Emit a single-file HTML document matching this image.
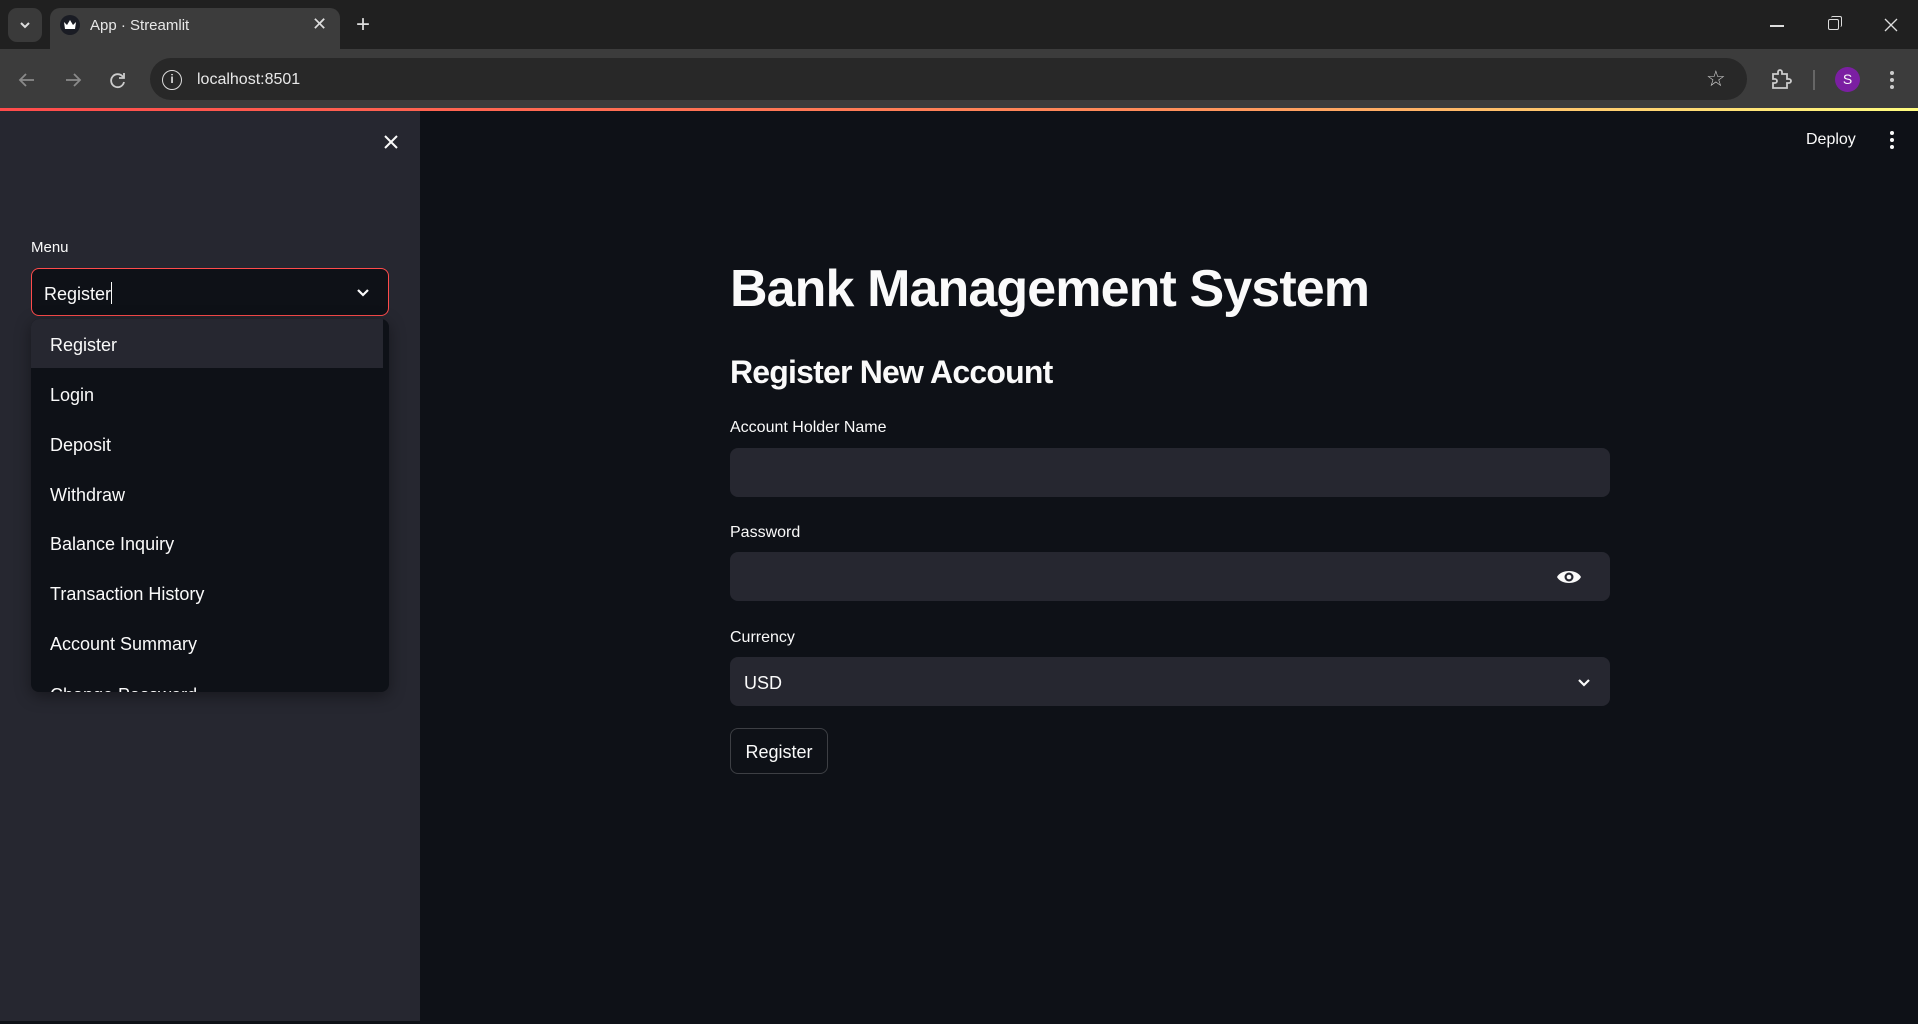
<!DOCTYPE html>
<html><head><meta charset="utf-8"><style>
*{margin:0;padding:0;box-sizing:border-box}
body{width:1918px;height:1024px;overflow:hidden;background:#0e1117;font-family:"Liberation Sans",sans-serif;color:#fafafa;position:relative}
.a{position:absolute}
.lbl{font-size:16px;color:#fafafa}
.inp{background:#262730;border-radius:8px;left:730px;width:880px;height:49px}
.item{left:50px;font-size:18px;color:#fafafa;line-height:20px}
</style></head><body>
<div class="a" style="left:0;top:0;width:1918px;height:49px;background:#202020"></div>
<div class="a" style="left:8px;top:8px;width:34px;height:34px;border-radius:9px;background:#3a3a3a"></div>
<svg class="a" style="left:18px;top:19px" width="14" height="12"><path d="M3 4l4 4 4-4" stroke="#ddd" stroke-width="2" fill="none"/></svg>
<div class="a" style="left:50px;top:8px;width:290px;height:44px;border-radius:10px 10px 0 0;background:#3c3c3c"></div>
<div class="a" style="left:60px;top:15px;width:20px;height:20px;border-radius:50%;background:#1a1c24"></div>
<svg class="a" style="left:63px;top:19px" width="14" height="12"><path d="M1 3l3 3 3-5 3 5 3-3-1 7H2z" fill="#fff"/></svg>
<div class="a" style="left:90px;top:17px;font-size:15px;color:#e8e8e8">App · Streamlit</div>
<div class="a" style="left:312px;top:14px;font-size:18px;color:#ddd">✕</div>
<div class="a" style="left:356px;top:11px;font-size:24px;color:#ddd">+</div>
<div class="a" style="left:1770px;top:25px;width:14px;height:1.5px;background:#ddd"></div>
<div class="a" style="left:1828px;top:19px;width:11px;height:11px;border:1.5px solid #ddd;border-radius:2px"></div>
<div class="a" style="left:1831px;top:16px;width:11px;height:11px;border-top:1.5px solid #ddd;border-right:1.5px solid #ddd;border-radius:2px"></div>
<svg class="a" style="left:1884px;top:18px" width="14" height="14"><path d="M1 1l12 12M13 1L1 13" stroke="#ddd" stroke-width="1.3"/></svg>
<div class="a" style="left:0;top:49px;width:1918px;height:59px;background:#3c3c3c"></div>
<svg class="a" style="left:17px;top:71px" width="20" height="18"><path d="M17 9H3M9 3L3 9l6 6" stroke="#8a8a8a" stroke-width="1.8" fill="none"/></svg>
<svg class="a" style="left:63px;top:71px" width="20" height="18"><path d="M3 9h14M11 3l6 6-6 6" stroke="#8a8a8a" stroke-width="1.8" fill="none"/></svg>
<svg class="a" style="left:108px;top:70px" width="20" height="20"><path d="M15 7A6.5 6.5 0 1 0 16 12" stroke="#ccc" stroke-width="1.8" fill="none"/><path d="M16 3v5h-5" fill="none" stroke="#ccc" stroke-width="1.8"/></svg>
<div class="a" style="left:150px;top:58px;width:1597px;height:42px;border-radius:21px;background:#282828"></div>
<div class="a" style="left:162px;top:70px;width:20px;height:20px;border-radius:50%;border:1.6px solid #ddd;font-size:12px;text-align:center;line-height:17px;color:#ddd;font-weight:bold">i</div>
<div class="a" style="left:197px;top:71px;font-size:16px;color:#e8e8e8">localhost:8501</div>
<div class="a" style="left:1706px;top:66px;font-size:22px;color:#ccc">☆</div>
<svg class="a" style="left:1770px;top:68px" width="24" height="24"><path d="M3 6h5V4a2 2 0 0 1 4 0v2h5v5h2a2 2 0 0 1 0 4h-2v5H3v-5h2a2 2 0 0 0 0-4H3z" stroke="#ccc" stroke-width="1.8" fill="none"/></svg>
<div class="a" style="left:1813px;top:70px;width:1.5px;height:20px;background:#666"></div>
<div class="a" style="left:1835px;top:67px;width:25px;height:25px;border-radius:50%;background:#7b1fa2;font-size:14px;text-align:center;line-height:25px">S</div>
<div class="a" style="left:1890px;top:71px;width:4px;height:4px;border-radius:50%;background:#ccc;box-shadow:0 7px 0 #ccc,0 14px 0 #ccc"></div>
<div class="a" style="left:0;top:108px;width:1918px;height:3px;background:linear-gradient(90deg,#ff4b4b,#ff8c5a 60%,#fffd80)"></div>
<div class="a" style="left:0;top:111px;width:420px;height:910px;background:#262730"></div>
<svg class="a" style="left:383px;top:134px" width="16" height="16"><path d="M2 2l12 12M14 2L2 14" stroke="#fafafa" stroke-width="2"/></svg>
<div class="a lbl" style="left:31px;top:239px;font-size:15px">Menu</div>
<div class="a" style="left:31px;top:268px;width:358px;height:48px;border:1.5px solid #ff4b4b;border-radius:8px;background:#0e1117"></div>
<div class="a" style="left:44px;top:282px;font-size:18px">Register<span style="display:inline-block;width:1px;height:22px;background:#fafafa;vertical-align:-4px"></span></div>
<svg class="a" style="left:355px;top:284px" width="16" height="16"><path d="M3 6l5 5 5-5" stroke="#fafafa" stroke-width="2.2" fill="none"/></svg>
<div class="a" style="left:31px;top:319px;width:358px;height:373px;border-radius:8px;background:#0e1117;overflow:hidden;box-shadow:0 4px 16px rgba(0,0,0,.4)">
 <div style="position:absolute;left:0;top:0;width:352px;height:49px;background:#262730"></div>
</div>
<div class="a" style="left:31px;top:319px;width:358px;height:373px;overflow:hidden">
 <div class="a item" style="left:19px;top:16px">Register</div>
 <div class="a item" style="left:19px;top:66px">Login</div>
 <div class="a item" style="left:19px;top:116px">Deposit</div>
 <div class="a item" style="left:19px;top:166px">Withdraw</div>
 <div class="a item" style="left:19px;top:215px">Balance Inquiry</div>
 <div class="a item" style="left:19px;top:265px">Transaction History</div>
 <div class="a item" style="left:19px;top:315px">Account Summary</div>
 <div class="a item" style="left:19px;top:366px">Change Password</div>
</div>
<div class="a" style="left:1806px;top:131px;font-size:16px">Deploy</div>
<div class="a" style="left:1890px;top:131px;width:4px;height:4px;border-radius:50%;background:#fafafa;box-shadow:0 7px 0 #fafafa,0 14px 0 #fafafa"></div>
<div class="a" style="left:730px;top:259px;font-size:52px;font-weight:bold;letter-spacing:-0.9px;white-space:nowrap">Bank Management System</div>
<div class="a" style="left:730px;top:354px;font-size:32px;font-weight:bold;letter-spacing:-0.8px">Register New Account</div>
<div class="a lbl" style="left:730px;top:419px">Account Holder Name</div>
<div class="a inp" style="top:448px"></div>
<div class="a lbl" style="left:730px;top:524px">Password</div>
<div class="a inp" style="top:552px"></div>
<svg class="a" style="left:1556px;top:566px" width="26" height="22"><path d="M1 11C5 3 21 3 25 11C21 19 5 19 1 11z" fill="#fafafa"/><circle cx="13" cy="11" r="4.5" fill="#262730"/><circle cx="13" cy="11" r="2.3" fill="#fafafa"/></svg>
<div class="a lbl" style="left:730px;top:629px">Currency</div>
<div class="a inp" style="top:657px"></div>
<div class="a" style="left:744px;top:673px;font-size:18px">USD</div>
<svg class="a" style="left:1576px;top:674px" width="16" height="16"><path d="M3 6l5 5 5-5" stroke="#fafafa" stroke-width="2.2" fill="none"/></svg>
<div class="a" style="left:730px;top:728px;width:98px;height:46px;border:1px solid rgba(250,250,250,.2);border-radius:8px;font-size:18px;text-align:center;line-height:46px">Register</div>
</body></html>
